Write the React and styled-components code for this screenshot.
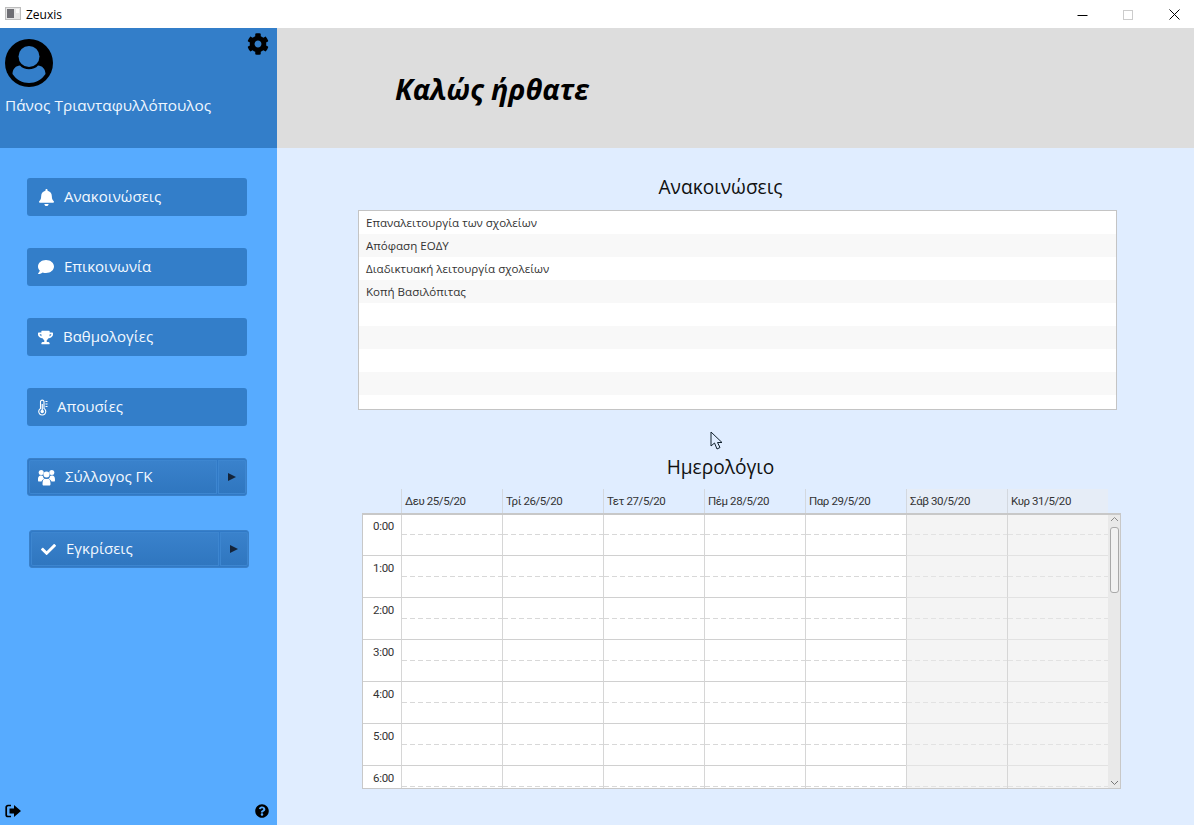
import React from "react";
import styled, { createGlobalStyle } from "styled-components";
import { FaBell, FaComment, FaTrophy, FaCheck, FaCog, FaQuestionCircle } from "react-icons/fa";

const Global = createGlobalStyle`
  html, body { margin: 0; padding: 0; background: #fff; overflow: hidden; }
  * { box-sizing: border-box; }
  body { font-family: "Open Sans", "Noto Sans", sans-serif; }
`;

const Window = styled.div`
  position: relative;
  width: 1194px;
  height: 825px;
  display: flex;
  flex-direction: column;
  overflow: hidden;
`;
const TitleBar = styled.div`
  height: 28px;
  flex: none;
  display: flex;
  align-items: center;
  background: #fff;
  padding-left: 5px;
  font: 12px "Open Sans", sans-serif;
  color: #000;
`;
const AppName = styled.span`
  margin-left: 5px;
`;
const WindowControls = styled.div`
  margin-left: auto;
  margin-right: -3px;
  display: flex;
  align-items: center;
`;
const WindowControl = styled.div`
  width: 46px;
  height: 28px;
  display: flex;
  align-items: center;
  justify-content: center;
`;
const Body = styled.div`
  flex: 1;
  display: flex;
  min-height: 0;
`;
const Sidebar = styled.aside`
  width: 277px;
  flex: none;
  background: #57abff;
  display: flex;
  flex-direction: column;
`;
const Profile = styled.div`
  position: relative;
  height: 120px;
  background: #337ec9;
  padding: 11px 0 0 5px;
  color: #eef6ff;
`;
const GearButton = styled.div`
  position: absolute;
  top: 5px;
  right: 8px;
  line-height: 0;
  color: #000;
`;
const UserName = styled.div`
  margin-top: 2px;
  font-size: 15.35px;
  line-height: 22px;
  font-weight: 400;
`;
const Nav = styled.nav`
  padding: 30px 0 0 27px;
  display: flex;
  flex-direction: column;
  gap: 32px;
  flex: 1;
`;
const NavButton = styled.div`
  width: 220px;
  height: 38px;
  background: #337ec9;
  border-radius: 3px;
  display: flex;
  align-items: center;
  padding-left: 11px;
  color: #f2f8ff;
  font-size: 15px;
`;
const NavIcon = styled.span`
  display: inline-flex;
  width: ${(p) => p.$w}px;
  color: #fff;
  flex: none;
`;
const NavLabel = styled.span`
  margin-bottom: 2px;
`;
const SplitButton = styled.div`
  width: 220px;
  height: 38px;
  margin-left: ${(p) => (p.$shift ? 2 : 0)}px;
  margin-top: ${(p) => (p.$shift ? 2 : 0)}px;
  border-radius: 3px;
  border: 1px solid #3a80c8;
  background: #3079c6;
  display: flex;
  padding: 1px 0 1px 1px;
  color: #f2f8ff;
  font-size: 15px;
`;
const SplitMain = styled.div`
  flex: 1;
  display: flex;
  align-items: center;
  padding-left: ${(p) => p.$pad}px;
  border-radius: 2px 0 0 2px;
  background: linear-gradient(#3a82cc, #2f76bf);
  box-shadow: inset 0 0 0 1px #3d86d0;
`;
const SplitArrow = styled.div`
  width: 28px;
  margin-left: 1px;
  display: flex;
  align-items: center;
  justify-content: center;
  border-radius: 0 2px 2px 0;
  background: linear-gradient(#3a82cc, #2f76bf);
  box-shadow: inset 0 0 0 1px #3d86d0;
`;
const Triangle = styled.span`
  width: 0;
  height: 0;
  border-left: 8px solid #14243a;
  border-top: 4px solid transparent;
  border-bottom: 4px solid transparent;
`;
const SideFooter = styled.div`
  height: 28px;
  display: flex;
  align-items: flex-start;
  justify-content: space-between;
  padding: 7px 8px 0 5px;
  color: #000;
`;
const Main = styled.main`
  flex: 1;
  display: flex;
  flex-direction: column;
  background: #e0edff;
  min-width: 0;
`;
const Banner = styled.header`
  height: 120px;
  flex: none;
  background: #dddddd;
  display: flex;
  align-items: center;
  padding-left: 118px;
`;
const Welcome = styled.h1`
  margin: 0;
  font-size: 28.8px;
  font-weight: 700;
  font-style: italic;
  color: #000;
`;
const Content = styled.div`
  flex: 1;
  display: flex;
  flex-direction: column;
`;
const SectionTitle = styled.h2`
  margin: 0;
  height: ${(p) => p.$h}px;
  padding-top: ${(p) => p.$top}px;
  padding-left: 1px;
  font-size: 19.15px;
  line-height: 28px;
  font-weight: 400;
  text-align: center;
  width: 886px;
  color: #111;
`;
const AnnounceList = styled.div`
  margin-left: 81px;
  width: 759px;
  height: 200px;
  background: #fff;
  border: 1px solid #c4c4c4;
  overflow: hidden;
`;
const AnnounceRow = styled.div`
  height: 23px;
  line-height: 24px;
  padding-left: 7px;
  font-size: 11.55px;
  color: #333;
  background: ${(p) => (p.$odd ? "#f8f8f8" : "#fff")};
`;
const DayHeader = styled.div`
  margin-left: 85px;
  height: 24px;
  display: flex;
  padding-left: 39px;
`;
const DayLabel = styled.div`
  width: 101px;
  flex: none;
  border-left: 1px solid #d3d8df;
  padding-left: 3px;
  font: 11.5px/24px "Roboto", sans-serif;
  letter-spacing: -0.42px;
  color: #333;
  background: ${(p) => (p.$weekend ? "#e6edf7" : "transparent")};
`;
const CalendarBox = styled.div`
  margin-left: 85px;
  width: 759px;
  height: 276px;
  background: #fff;
  border: 1px solid #c8c8c8;
  border-top-width: 2px;
  display: flex;
  overflow: hidden;
`;
const Hours = styled.div`
  flex: 1;
  min-width: 0;
  margin-top: -1px;
`;
const HourRow = styled.div`
  height: 42px;
  display: flex;
`;
const HourLabel = styled.div`
  width: 38px;
  flex: none;
  text-align: right;
  padding: 4px 7px 0 0;
  border-bottom: 1px solid #d0d0d0;
  font: 11.5px/16px "Roboto", sans-serif;
  letter-spacing: -0.3px;
  color: #333;
`;
const Slot = styled.div`
  width: 101px;
  flex: none;
  border-left: 1px solid #d6d6d6;
  border-bottom: 1px solid ${(p) => (p.$weekend ? "#e2e2e2" : "#d0d0d0")};
  background: ${(p) => (p.$weekend ? "#f4f4f4" : "#fff")};
`;
const HalfLine = styled.div`
  height: 21px;
  background-image: linear-gradient(to right, ${(p) => (p.$weekend ? "#e2e2e2" : "#d8d8d8")} 5px, transparent 5px);
  background-size: 8px 1px;
  background-repeat: repeat-x;
  background-position: 0 bottom;
`;
const ScrollTrack = styled.div`
  width: 12px;
  flex: none;
  background: #e9e9e9;
  display: flex;
  flex-direction: column;
  align-items: center;
`;
const ScrollCap = styled.div`
  height: ${(p) => p.$h}px;
  flex: none;
  display: flex;
  align-items: center;
  justify-content: center;
`;
const ScrollThumb = styled.div`
  width: 9px;
  height: 66px;
  margin-top: 4px;
  background: #f2f2f2;
  border: 1px solid #a9a9a9;
  border-radius: 3px;
`;
const ScrollGap = styled.div`
  flex: 1;
`;
const Cursor = styled.svg`
  position: absolute;
  left: 710px;
  top: 431px;
`;

const days = [
  ["Δευ 25/5/20", false], ["Τρί 26/5/20", false], ["Τετ 27/5/20", false], ["Πέμ 28/5/20", false],
  ["Παρ 29/5/20", false], ["Σάβ 30/5/20", true], ["Κυρ 31/5/20", true],
];
const hours = ["0:00", "1:00", "2:00", "3:00", "4:00", "5:00", "6:00"];
const notices = ["Επαναλειτουργία των σχολείων", "Απόφαση ΕΟΔΥ", "Διαδικτυακή λειτουργία σχολείων", "Κοπή Βασιλόπιτας", "", "", "", "", ""];

const Avatar = () => (
  <svg width="48" height="48" viewBox="0 0 48 48">
    <circle cx="24" cy="24" r="24" fill="#000" />
    <circle cx="24" cy="17.500" r="10.500" fill="#337ec9" />
    <path d="M7.500 35 C7.500 30 11 26.500 15 26.500 C19 31.500 29 31.500 33 26.500 C37 26.500 40.500 30 40.500 35 C36.500 41 30.500 44 24 44 C17.500 44 11.500 41 7.500 35Z" fill="#337ec9" />
  </svg>
);
const SignOut = () => (
  <svg width="16" height="14" viewBox="0 0 16 14">
    <path d="M6 1.500H3A1.800 1.800 0 0 0 1.200 3.300V10.700A1.800 1.800 0 0 0 3 12.500H6" fill="none" stroke="#000" strokeWidth="1.700" />
    <path d="M4.500 4.500H9V1L16 7L9 13V9.500H4.500Z" fill="#000" />
  </svg>
);
const Thermometer = () => (
  <svg width="10" height="17" viewBox="0 0 10 17" fill="none" stroke="#fff">
    <path d="M2.500 9.500V2.500A1.800 1.800 0 0 1 6 2.500V9.500A3.500 3.500 0 1 1 2.500 9.500Z" strokeWidth="1.100" />
    <circle cx="4.250" cy="12.500" r="1.700" fill="#fff" stroke="none" />
    <path d="M4.250 12.500V5" strokeWidth="1.200" />
    <path d="M7.500 2.500H9.500M7.500 5H9.500M7.500 7.500H9.500" strokeWidth="1" />
  </svg>
);
const Users = () => (
  <svg width="17" height="17" viewBox="0 0 17 17" fill="#fff">
    <circle cx="3.200" cy="3.500" r="2.500" />
    <circle cx="13.800" cy="3.500" r="2.500" />
    <circle cx="8.500" cy="5.500" r="3" />
    <path d="M0 11C0 7.500 1.200 6.500 3.200 6.500C4 6.500 4.600 6.800 5 7.200C5.200 8.300 5.500 9 6.300 9.700C5 10.300 3.900 11.200 3.500 12.500H0.800C0.300 12.500 0 12 0 11Z" />
    <path d="M17 11C17 7.500 15.800 6.500 13.800 6.500C13 6.500 12.400 6.800 12 7.200C11.800 8.300 11.500 9 10.700 9.700C12 10.300 13.100 11.200 13.500 12.500H16.200C16.700 12.500 17 12 17 11Z" />
    <path d="M4.500 15C4.500 11.500 5.500 9.800 7 9.800C7.500 10.200 9.500 10.200 10 9.800C11.500 9.800 12.500 11.500 12.500 15C12.500 16 12 16.500 11.300 16.500H5.700C5 16.500 4.500 16 4.500 15Z" />
  </svg>
);

export default function App() {
  return (
    <Window>
      <Global />
      <TitleBar>
        <svg width="16" height="14" viewBox="0 0 16 14">
          <rect x="0.500" y="0.500" width="15" height="12" fill="#e6e6e6" stroke="#bdbdbd" />
          <rect x="2" y="2" width="7" height="9" fill="#6e6e74" />
          <rect x="11" y="2" width="3" height="4" fill="#fafafa" />
        </svg>
        <AppName>Zeuxis</AppName>
        <WindowControls>
          <WindowControl>
            <svg width="11" height="11" viewBox="0 0 11 11"><path d="M0.500 6.500H10.500" stroke="#000" /></svg>
          </WindowControl>
          <WindowControl>
            <svg width="11" height="11" viewBox="0 0 11 11"><rect x="0.500" y="1.500" width="9" height="9" fill="none" stroke="#ccc" /></svg>
          </WindowControl>
          <WindowControl>
            <svg width="11" height="11" viewBox="0 0 11 11"><path d="M0.500 0.500L10.500 10.500M10.500 0.500L0.500 10.500" stroke="#000" /></svg>
          </WindowControl>
        </WindowControls>
      </TitleBar>
      <Body>
        <Sidebar>
          <Profile>
            <Avatar />
            <GearButton><FaCog size={22} /></GearButton>
            <UserName>Πάνος Τριανταφυλλόπουλος</UserName>
          </Profile>
          <Nav>
            <NavButton><NavIcon $w={26}><FaBell size={17} /></NavIcon><NavLabel>Ανακοινώσεις</NavLabel></NavButton>
            <NavButton><NavIcon $w={26}><FaComment size={16} /></NavIcon><NavLabel>Επικοινωνία</NavLabel></NavButton>
            <NavButton><NavIcon $w={25}><FaTrophy size={15} /></NavIcon><NavLabel>Βαθμολογίες</NavLabel></NavButton>
            <NavButton><NavIcon $w={19}><Thermometer /></NavIcon><NavLabel>Απουσίες</NavLabel></NavButton>
            <SplitButton>
              <SplitMain $pad={9}><NavIcon $w={27}><Users /></NavIcon><NavLabel>Σύλλογος ΓΚ</NavLabel></SplitMain>
              <SplitArrow><Triangle /></SplitArrow>
            </SplitButton>
            <SplitButton $shift>
              <SplitMain $pad={10}><NavIcon $w={25}><FaCheck size={15} /></NavIcon><NavLabel>Εγκρίσεις</NavLabel></SplitMain>
              <SplitArrow><Triangle /></SplitArrow>
            </SplitButton>
          </Nav>
          <SideFooter>
            <SignOut />
            <FaQuestionCircle size={14} />
          </SideFooter>
        </Sidebar>
        <Main>
          <Banner><Welcome>Καλώς ήρθατε</Welcome></Banner>
          <Content>
            <SectionTitle $h={62} $top={25}>Ανακοινώσεις</SectionTitle>
            <AnnounceList>
              {notices.map((n, i) => <AnnounceRow key={i} $odd={i % 2 === 1}>{n}</AnnounceRow>)}
            </AnnounceList>
            <SectionTitle $h={79} $top={43}>Ημερολόγιο</SectionTitle>
            <DayHeader>
              {days.map(([d, w]) => <DayLabel key={d} $weekend={w}>{d}</DayLabel>)}
            </DayHeader>
            <CalendarBox>
              <Hours>
                {hours.map((h) => (
                  <HourRow key={h}>
                    <HourLabel>{h}</HourLabel>
                    {days.map(([d, w]) => (
                      <Slot key={d} $weekend={w}><HalfLine $weekend={w} /></Slot>
                    ))}
                  </HourRow>
                ))}
              </Hours>
              <ScrollTrack>
                <ScrollCap $h={8}>
                  <svg width="9" height="6" viewBox="0 0 9 6"><path d="M1 5L4.500 1.500L8 5" fill="none" stroke="#8a8a8a" /></svg>
                </ScrollCap>
                <ScrollThumb />
                <ScrollGap />
                <ScrollCap $h={10}>
                  <svg width="9" height="6" viewBox="0 0 9 6"><path d="M1 1L4.500 4.500L8 1" fill="none" stroke="#777" /></svg>
                </ScrollCap>
              </ScrollTrack>
            </CalendarBox>
          </Content>
        </Main>
      </Body>
      <Cursor width="14" height="20" viewBox="0 0 14 20">
        <path d="M1 1V15L4.500 12L7 18L10 16.500L7.500 11.500H12Z" fill="#e0edff" stroke="#10202c" strokeWidth="1" />
      </Cursor>
    </Window>
  );
}
